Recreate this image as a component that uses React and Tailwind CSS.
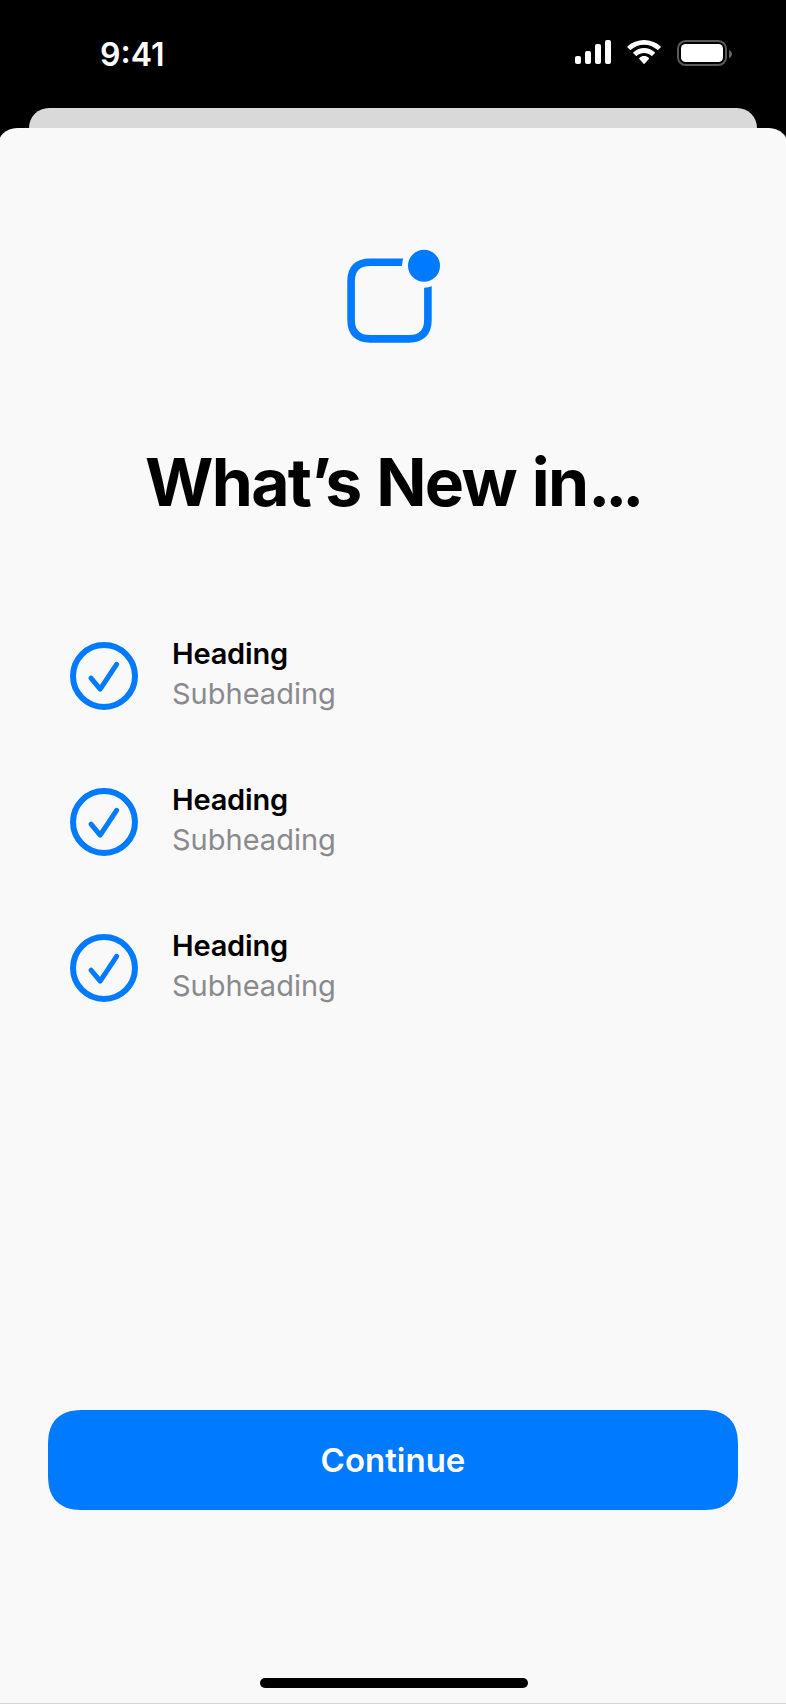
const features = [
  { id: 1, title: "Heading", detail: "Subheading" },
  { id: 2, title: "Heading", detail: "Subheading" },
  { id: 3, title: "Heading", detail: "Subheading" },
];

function StatusIcons() {
  return (
    <svg className="h-[26px] w-[158px]" viewBox="575 40 158 26" fill="white" aria-hidden="true">
      <rect x="575" y="56" width="6" height="8" rx="2" />
      <rect x="585" y="51" width="6" height="13" rx="2" />
      <rect x="595" y="44" width="6" height="20" rx="2" />
      <rect x="605" y="40" width="6" height="24" rx="2" />
      <path
        transform="translate(627.2 40) scale(1.97 1.95)"
        d="M8.571 2.466C11.058 2.466 13.45 3.388 15.253 5.042C15.389 5.17 15.606 5.168 15.739 5.038L17.037 3.775C17.104 3.709 17.142 3.62 17.142 3.527C17.141 3.435 17.102 3.346 17.034 3.281C12.303-1.094 4.839-1.094.108 3.281C.04 3.346 0 3.435 0 3.527C0 3.62.037 3.709.105 3.775L1.403 5.038C1.536 5.168 1.753 5.17 1.889 5.042C3.692 3.388 6.084 2.466 8.571 2.466ZM8.568 6.687C9.925 6.686 11.234 7.198 12.24 8.122C12.376 8.253 12.591 8.251 12.724 8.116L14.011 6.788C14.078 6.718 14.116 6.623 14.115 6.524C14.114 6.425 14.075 6.331 14.005 6.262C10.942 3.329 6.197 3.329 3.133 6.262C3.064 6.331 3.024 6.425 3.023 6.524C3.023 6.623 3.06 6.718 3.128 6.788L4.415 8.116C4.548 8.251 4.762 8.253 4.898 8.122C5.904 7.199 7.211 6.687 8.568 6.687ZM11.092 9.48C11.094 9.585 11.057 9.687 10.99 9.761L8.813 12.216C8.749 12.288 8.662 12.328 8.572 12.328C8.481 12.328 8.394 12.288 8.33 12.216L6.153 9.761C6.086 9.687 6.049 9.585 6.051 9.48C6.053 9.375 6.094 9.275 6.164 9.204C7.554 7.894 9.59 7.894 10.98 9.204C11.05 9.275 11.091 9.375 11.092 9.48Z"
      />
      <rect x="678" y="41" width="48" height="24" rx="7.6" fill="none" stroke="#595959" strokeWidth="2" />
      <path d="M729 50v8.2c1.8-.7 3-2.3 3-4.1s-1.2-3.4-3-4.1z" fill="#666" />
      <rect x="681" y="44" width="42" height="18" rx="4.6" />
    </svg>
  );
}

function BadgeIcon() {
  return (
    <svg className="h-[94px] w-[94px]" viewBox="347 249 94 94" aria-hidden="true">
      <path
        d="M370 262.2H409C421.500 262.200 427.900 268.600 427.900 281V320C427.900 332.500 421.500 338.900 409 338.900H370C357.500 338.900 351.100 332.500 351.100 320V281C351.100 268.600 357.500 262.200 370 262.200Z"
        fill="none"
        stroke="#007aff"
        strokeWidth="7.6"
      />
      <circle cx="424" cy="265.700" r="22" fill="#f9f9f9" />
      <circle cx="424" cy="265.700" r="16" fill="#007aff" />
    </svg>
  );
}

function CheckIcon() {
  return (
    <svg
      className="size-[68px] shrink-0"
      viewBox="0 0 68 68"
      fill="none"
      stroke="#007aff"
      strokeLinecap="round"
      strokeLinejoin="round"
      aria-hidden="true"
    >
      <circle cx="34" cy="34" r="31" strokeWidth="6" />
      <path d="M21 36.200L30.200 47.200L46.600 22.300" strokeWidth="5" />
    </svg>
  );
}

export default function App() {
  return (
    <div className="flex h-[1704px] w-[786px] flex-col overflow-hidden bg-black font-['Inter',sans-serif]">
      <header className="flex h-[108px] shrink-0 items-start justify-between pl-[100px] pr-[53px]">
        <span className="mt-[35px] text-[32px] leading-[40px] font-semibold text-white">9:41</span>
        <div className="mt-[40px]">
          <StatusIcons />
        </div>
      </header>

      <div className="mx-[29px] h-5 shrink-0 rounded-t-[20px] bg-[#d9d9d9]" />

      <main className="-mx-[3px] flex flex-1 flex-col items-center rounded-t-[20px] border-b border-[#d4d4d6] bg-[#f9f9f9] px-[3px] pt-[121px]">
        <div className="pl-px">
          <BadgeIcon />
        </div>
        <h1 className="mt-[99px] h-20 w-[786px] pl-[145px] text-[66px] leading-[80px] font-bold tracking-[-1.7px] [word-spacing:1.8px] whitespace-nowrap text-black">
          What’s New in<span className="ml-px tracking-[-5px]">...</span>
        </h1>

        <ul className="mt-[112px] flex w-full flex-col gap-[66px] pl-[70px]">
          {features.map((feature) => (
            <li key={feature.id} className="flex h-20 items-center gap-[34px]">
              <div className="pt-1">
                <CheckIcon />
              </div>
              <div className="text-[29px] leading-[40px]">
                <p className="font-semibold tracking-[-0.2px] text-black">{feature.title}</p>
                <p className="text-[#8a8a8e]">{feature.detail}</p>
              </div>
            </li>
          ))}
        </ul>

        <button
          type="button"
          className="mt-[404px] h-[100px] w-[690px] shrink-0 rounded-[28px] bg-[#007aff] text-[33px] leading-[40px] font-semibold text-white supports-[corner-shape:squircle]:rounded-[36px] supports-[corner-shape:squircle]:[corner-shape:superellipse(1.35)]"
        >
          Continue
        </button>

        <div className="mt-auto mb-[15px] ml-[2px] h-[10px] w-[268px] rounded-full bg-black" />
      </main>
    </div>
  );
}
